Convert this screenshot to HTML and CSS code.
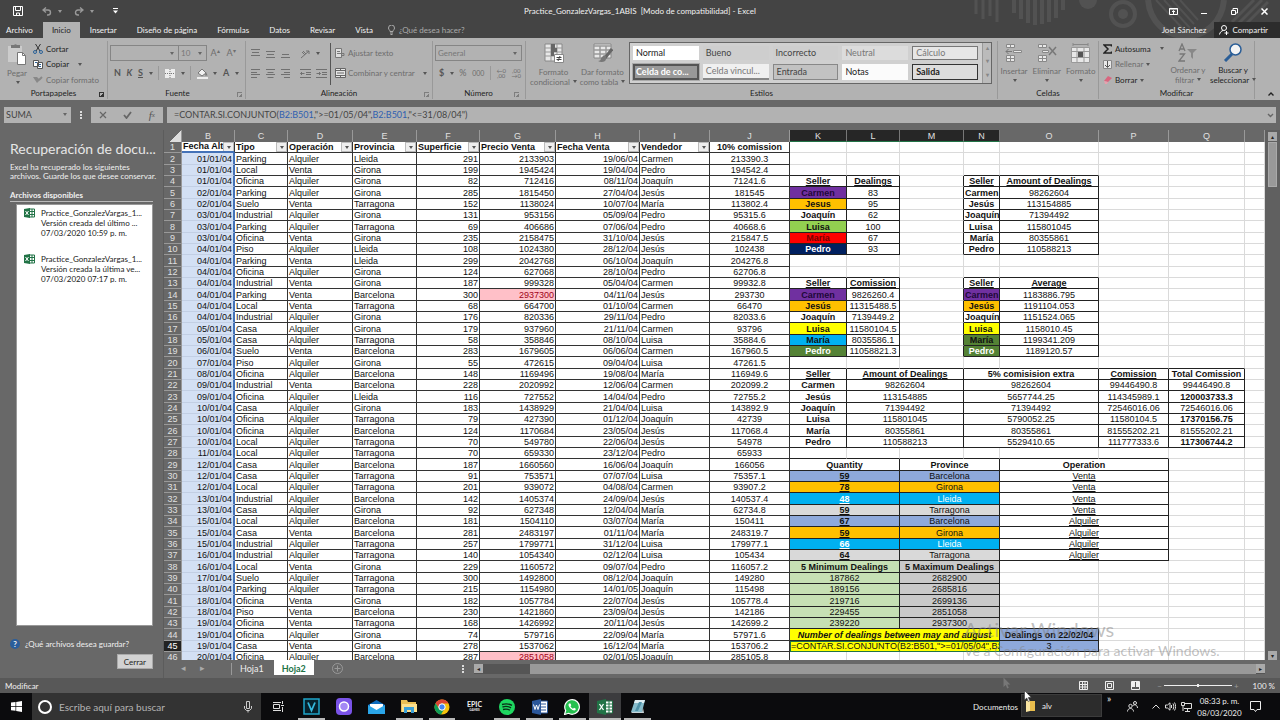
FILE: index.html
```html
<!DOCTYPE html>
<html lang="es">
<head>
<meta charset="utf-8">
<title>Practice_GonzalezVargas_1ABIS - Excel</title>
<link rel="stylesheet" href="styles.css">
</head>
<body>
<header class="top">
  <svg class="decor" width="300" height="38" viewBox="0 0 300 38" fill="none" stroke="#525252">
    <g stroke-width="3"><path d="M6 0v14M13 0v19M20 0v16M27 0v22"/></g>
    <g stroke-width="4"><path d="M44 0v13M51 0v19M58 0v23M65 0v25M72 0v24M79 0v22M86 0v18M93 0v10"/></g>
    <circle cx="118" cy="0" r="9" fill="#525252" stroke="none"/>
    <circle cx="153" cy="14" r="12" stroke-width="4"/><circle cx="153" cy="14" r="5" fill="#525252" stroke="none"/>
    <path d="M178 0c2 22 18 36 38 36s36-14 38-36" stroke-width="6"/>
    <path d="M186 0l28 30M194 0l26 28M202 0l22 24M210 0l18 20" stroke-width="2"/>
    <path d="M262 22L284 0M268 24l24-24M276 24l22-22" stroke-width="3"/>
  </svg>
  <div class="titlebar">
    <div class="quick">
      <button aria-label="Guardar"><svg width="10" height="10" viewBox="0 0 10 10" fill="none" stroke="#fff"><path d="M.5.5h9v9h-9zM2.500.5v4h5v-4M3.500 9.500v-2.500h3v2.500"/></svg></button>
      <button class="dim" aria-label="Deshacer"><svg width="10" height="9" viewBox="0 0 10 9" fill="none" stroke="#999" stroke-width="1.400"><path d="M4 .5L1 3l3 2.500M1 3h5a2.500 2.500 0 010 5H5"/></svg><i class="caret"></i></button>
      <button class="dim" aria-label="Rehacer"><svg width="10" height="9" viewBox="0 0 10 9" fill="none" stroke="#999" stroke-width="1.400"><path d="M6 .5L9 3 6 5.500M9 3H4a2.500 2.500 0 000 5h1"/></svg><i class="caret"></i></button>
      <button aria-label="Personalizar"><svg width="5" height="6" viewBox="0 0 5 6"><path d="M0 0h5v1H0zM0 2.500h5L2.500 5.500z" fill="#fff"/></svg></button>
    </div>
    <h1>Practice_GonzalezVargas_1ABIS &nbsp;[Modo de compatibilidad] - Excel</h1>
    <div class="win">
      <button aria-label="Opciones de cinta"><svg width="9" height="7" viewBox="0 0 9 7" fill="none" stroke="#fff"><path d="M.5.5h8v6h-8zM0 1h9M4.500 6V3M3 4l1.500-1.500L6 4"/></svg></button>
      <button aria-label="Minimizar"><svg width="7" height="7" viewBox="0 0 7 7" stroke="#fff"><path d="M0 5.500h6"/></svg></button>
      <button aria-label="Restaurar"><svg width="7" height="7" viewBox="0 0 7 7" fill="none" stroke="#fff"><path d="M.5 2.500h4v4h-4zM2 2V.5h4.500V5H5"/></svg></button>
      <button aria-label="Cerrar ventana"><svg width="7" height="7" viewBox="0 0 7 7" stroke="#fff" stroke-width="1.500"><path d="M.5.5l6 6M6.500.5l-6 6"/></svg></button>
    </div>
  </div>
  <nav class="tabs">
    <button>Archivo</button><button class="on">Inicio</button><button>Insertar</button><button>Diseño de página</button><button>Fórmulas</button><button>Datos</button><button>Revisar</button><button>Vista</button>
    <button class="tell"><svg width="7" height="10" viewBox="0 0 7 10" fill="none" stroke="#aaa"><path d="M2 6.500C2 5 .5 4.800.5 3a3 3 0 016 0C6.500 4.800 5 5 5 6.500zM2 8h3M2.500 9.500h2"/></svg>¿Qué desea hacer?</button>
    <span class="user">Joel Sánchez</span>
    <button class="share"><svg width="10" height="10" viewBox="0 0 10 10" fill="none" stroke="#fff"><circle cx="5" cy="3" r="2.500"/><path d="M.5 9.500C1 7 2.500 6 4 5.500M5.500 8h4M7.500 6v4"/></svg>Compartir</button>
  </nav>
</header>

<section class="ribbon">
  <div class="group clip">
    <div class="gbody row">
      <button class="big dis"><svg width="20" height="22" viewBox="0 0 20 22"><path d="M1 3h14v16H1z" fill="#ccc"/><path d="M4 2h3a2 1.500 0 013 0h3v3H4z" fill="#777"/><path d="M10.500 9.500h5l3 3v9h-8z" fill="#fff" stroke="#777"/><path d="M15.500 9.500v3h3" fill="none" stroke="#777"/></svg>Pegar<i class="caret"></i></button>
      <div class="list">
        <button><svg width="10" height="10" viewBox="0 0 10 10" fill="none" stroke="#333"><path d="M2.500 0L7 7M7.500 0L3 7"/><g stroke="#2b6299"><circle cx="2" cy="8" r="1.500"/><circle cx="8" cy="8" r="1.500"/></g></svg>Cortar</button>
        <button><svg width="10" height="9" viewBox="0 0 10 9" fill="#fff" stroke="#555"><path d="M.5.5h5v6h-5zM4.500 2.500h5v6h-5z"/><path d="M6 4.500h2M6 6.500h2M2 2.500h2" stroke="#2b6299"/></svg>Copiar<i class="caret wide"></i></button>
        <button class="dis"><svg width="10" height="9" viewBox="0 0 10 9"><path d="M0 1l4 6 3-3-3-3z" fill="#888"/><path d="M6 4l3-3" stroke="#888" stroke-width="2"/></svg>Copiar formato</button>
      </div>
    </div>
    <div class="glabel">Portapapeles<i class="corner"></i></div>
  </div>
  <div class="group font">
    <div class="gbody col">
      <div class="row first"><label class="drop grow"><select aria-label="Fuente"><option></option></select></label><label class="drop size"><select aria-label="Tamaño"><option>10</option></select></label><button class="dis let">A<sup>▴</sup></button><button class="dis let sm">A<sup>▾</sup></button></div>
      <div class="row second"><button class="let b">N</button><button class="let b it">K</button><button class="let b un">S</button><i class="caret"></i><i class="sep"></i>
        <button aria-label="Bordes"><svg width="10" height="9" viewBox="0 0 10 9"><path d="M0 0h10v9H0z" fill="#ececec"/><path d="M5 0v9M0 4.500h10" stroke="#777" stroke-dasharray="1 1"/></svg></button><i class="caret"></i><i class="sep"></i>
        <button aria-label="Relleno"><svg width="11" height="11" viewBox="0 0 11 11"><path d="M1 5l4-4 4 4-4 3z" fill="#f2f2f2" stroke="#777"/><path d="M9 4l1.500 3.500H8z" fill="#777"/><path d="M0 9h11v2H0z" fill="#eee"/></svg></button><i class="caret"></i><button class="dis let b">A</button><i class="caret"></i></div>
    </div>
    <div class="glabel">Fuente<i class="corner dim"></i></div>
  </div>
  <div class="group align">
    <div class="gbody row">
      <div class="aicons">
        <svg width="9" height="9"><path d="M0 .5h9M1 3.500h7M0 6.500h9"/></svg><svg width="9" height="9"><path d="M0 2.500h9M1 5.500h7M0 8.500h9"/></svg><svg width="9" height="9"><path d="M1 5.500h7M0 8.500h9"/></svg><svg width="12" height="10"><path d="M1 9L9 2M6 2h3v3M2 3l3 3M3 2l3 3"/></svg><i class="caret"></i>
        <svg width="9" height="9"><path d="M0 .5h9M0 3.500h6M0 5.500h9M0 8.500h6"/></svg><svg width="9" height="9"><path d="M0 .5h9M1.500 3.500h6M0 5.500h9M1.500 8.500h6"/></svg><svg width="9" height="9"><path d="M0 .5h9M3 3.500h6M0 5.500h9M3 8.500h6"/></svg><svg width="11" height="9"><path d="M0 .5h11M6 3.500h5M6 5.500h5M0 8.500h11M4.500 4.500h-4M2 3L.5 4.500 2 6"/></svg><svg width="11" height="9"><path d="M0 .5h11M6 3.500h5M6 5.500h5M0 8.500h11M.5 4.500h4M3 3l1.500 1.500L3 6"/></svg>
      </div>
      <div class="wrapcol dis">
        <button><svg width="11" height="10" viewBox="0 0 11 10" fill="none" stroke="#777"><path d="M.5.5h6v9h-6z" fill="#ddd"/><path d="M2 3.500h3M2 5.500h7v2H7"/></svg>Ajustar texto</button>
        <button><svg width="11" height="10" viewBox="0 0 11 10" fill="#e6e6e6" stroke="#666"><path d="M.5.5h10v9H.5zM0 2.500h11M0 7.500h11M2 5h7M5.500 0v2.500M5.500 7.500V10"/></svg>Combinar y centrar<i class="caret wide"></i></button>
      </div>
    </div>
    <div class="glabel">Alineación<i class="corner dim"></i></div>
  </div>
  <div class="group num">
    <div class="gbody col">
      <div class="row first"><label class="drop grow"><select aria-label="Formato de número"><option>General</option></select></label></div>
      <div class="row second dis"><button class="let b">$</button><i class="caret"></i><button class="let">%</button><button class="tiny">000</button><i class="sep"></i><button class="tiny two">←0<br>,00</button><button class="tiny two">,00<br>→0</button></div>
    </div>
    <div class="glabel">Número<i class="corner dim"></i></div>
  </div>
  <div class="group styles">
    <div class="gbody row">
      <button class="big dis"><svg width="20" height="21" viewBox="0 0 20 21"><path d="M1 1h17v17H1z" fill="#e8e8e8" stroke="#888"/><path d="M1 5h17M1 9h17M1 13h17M7 1v17M13 1v17" stroke="#999"/><path d="M7 1h4v4H7zM7 5h6v4H7zM7 9h3v4H7z" fill="#666"/><path d="M10.500 11.500h9v8h-9z" fill="#fff" stroke="#888"/><path d="M12.500 14.500h5M12.500 16.500h5M16 13l-2 5" stroke="#444"/></svg><span>Formato<br>condicional <i class="caret"></i></span></button>
      <button class="big dis"><svg width="20" height="21" viewBox="0 0 20 21"><path d="M1 1h17v14H1z" fill="#e8e8e8" stroke="#888"/><path d="M1 3h17M1 7h17M1 11h17M7 3v12M13 3v12" stroke="#999" stroke-width="1.500"/><path d="M19 6l-7 9" stroke="#666" stroke-width="3"/><path d="M13 13l-2-1-3 3c0 2-1 3-3 3 3 2 8 1 8-2z" fill="#777"/></svg><span>Dar formato<br>como tabla <i class="caret"></i></span></button>
      <div class="gallery">
        <button class="s1">Normal</button><button class="s2">Bueno</button><button class="s2">Incorrecto</button><button class="s3">Neutral</button><button class="s4">Cálculo</button>
        <button class="s5">Celda de co...</button><button class="s6">Celda vincul...</button><button class="s7">Entrada</button><button class="s8">Notas</button><button class="s9">Salida</button>
        <div class="spin"><b>▴</b><b>▾</b><b>▾</b></div>
      </div>
    </div>
    <div class="glabel">Estilos</div>
  </div>
  <div class="group cells">
    <div class="gbody row dis">
      <button class="big"><svg width="18" height="20" viewBox="0 0 18 20"><g fill="#e8e8e8" stroke="#888"><path d="M1.500 1.500h4v3h-4zM5.500 1.500h4v3h-4zM8.500 7.500h8v2h-8zM1.500 12.500h4v3h-4zM5.500 12.500h4v3h-4zM1.500 15.500h4v3h-4zM5.500 15.500h4v3h-4z"/></g><path d="M1 8.500h6M3.500 6L1 8.500 3.500 11" fill="none" stroke="#777"/></svg>Insertar<i class="caret"></i></button>
      <button class="big"><svg width="20" height="20" viewBox="0 0 20 20"><g fill="#e8e8e8" stroke="#888"><path d="M1.500 1.500h4v3h-4zM5.500 1.500h4v3h-4zM5.500 7.500h6v2h-6zM1.500 12.500h4v3h-4zM5.500 12.500h4v3h-4zM1.500 15.500h4v3h-4zM5.500 15.500h4v3h-4z"/></g><path d="M12 4l7 8M19 4l-7 8" stroke="#777" stroke-width="1.500"/></svg>Eliminar<i class="caret"></i></button>
      <button class="big"><svg width="20" height="20" viewBox="0 0 20 20"><path d="M2 1.500h15M2 0v3M17 0v3" stroke="#888"/><path d="M.5 4.500h18v15H.5z" fill="#e8e8e8" stroke="#999"/><path d="M0 8.500h19M0 14.500h19M6 4v16M13 4v16" stroke="#999"/><path d="M7 9h5v5H7z" fill="#555"/></svg>Formato<i class="caret"></i></button>
    </div>
    <div class="glabel">Celdas</div>
  </div>
  <div class="group edit">
    <div class="gbody row">
      <div class="list">
        <button><svg width="9" height="10" viewBox="0 0 9 10" fill="none" stroke="#222" stroke-width="1.500"><path d="M8.500 2.500V1H1l4 4-4 4h7.500V7.500"/></svg>Autosuma<i class="caret wide"></i></button>
        <button class="dis"><svg width="9" height="9" viewBox="0 0 9 9"><path d="M.5.5h8v8h-8z" fill="#e8e8e8" stroke="#888"/><path d="M4.500 1v6M2 5l2.500 2.500L7 5" fill="none" stroke="#555"/></svg>Rellenar<i class="caret"></i></button>
        <button><svg width="9" height="8" viewBox="0 0 9 8"><path d="M1 5l4-5 4 2-4 4z" fill="#d9667f"/><path d="M1 5l4 1-1 2H2z" fill="#e7a1ae"/></svg>Borrar<i class="caret"></i></button>
      </div>
      <button class="big dis"><svg width="20" height="19" viewBox="0 0 20 19" fill="none" stroke="#777" stroke-width="1.300"><path d="M1 8l3-7 3 7M2 6h4M1.500 11h5L1 18h6"/><path d="M9 6h10l-4 4v6l-2-2v-4z" fill="#888" stroke="none"/></svg><span>Ordenar y<br>filtrar <i class="caret"></i></span></button>
      <button class="big"><svg width="20" height="19" viewBox="0 0 20 19"><path d="M9 11l-7 7" stroke="#2b5e97" stroke-width="3"/><circle cx="12.500" cy="6.500" r="5.500" fill="#f4f4f4" stroke="#2b5e97" stroke-width="1.500"/></svg><span>Buscar y<br>seleccionar <i class="caret"></i></span></button>
    </div>
    <div class="glabel">Modificar</div>
  </div>
  <div class="collapse"><svg width="6" height="4" viewBox="0 0 6 4" fill="none" stroke="#222" stroke-width="1.400"><path d="M.5 3.500L3 1l2.500 2.500"/></svg></div>
</section>

<section class="fbar">
  <label class="drop name"><select aria-label="Cuadro de nombres"><option>SUMA</option></select></label>
  <span class="dots"></span>
  <div class="fbtns"><button aria-label="Cancelar"><svg width="8" height="8" viewBox="0 0 8 8" stroke="#666" stroke-width="1.200"><path d="M1 1l6 6M7 1L1 7"/></svg></button><button aria-label="Introducir"><svg width="9" height="8" viewBox="0 0 9 8" fill="none" stroke="#666" stroke-width="1.800"><path d="M1 4l2.500 3L8 1"/></svg></button><button class="fx">f<small>x</small></button></div>
  <div class="formula"><span>=CONTAR.SI.CONJUNTO(<em>B2:B501</em>,"&gt;=01/05/04",<em>B2:B501</em>,"&lt;=31/08/04")</span><svg width="7" height="5" viewBox="0 0 7 5" fill="none" stroke="#666" stroke-width="1.400"><path d="M1 1l2.500 2.500L6 1"/></svg></div>
</section>

<main>
  <aside>
    <h2>Recuperación de docu...</h2>
    <p>Excel ha recuperado los siguientes archivos. Guarde los que desee conservar.</p>
    <h3>Archivos disponibles</h3>
    <ul>
      <li><svg width="11" height="10" viewBox="0 0 11 10"><path d="M5 1h5.500v8H5z" fill="#fff" stroke="#217346"/><path d="M5 3.500h5M5 6.500h5M8 1v8" stroke="#217346"/><path d="M0 1l6-1v10L0 9z" fill="#217346"/><path d="M1.500 3l3 4M4.500 3l-3 4" stroke="#fff"/></svg><div>Practice_GonzalezVargas_1...<br>Versión creada del último ...<br>07/03/2020 10:59 p. m.</div></li>
      <li><svg width="11" height="10" viewBox="0 0 11 10"><path d="M5 1h5.500v8H5z" fill="#fff" stroke="#217346"/><path d="M5 3.500h5M5 6.500h5M8 1v8" stroke="#217346"/><path d="M0 1l6-1v10L0 9z" fill="#217346"/><path d="M1.500 3l3 4M4.500 3l-3 4" stroke="#fff"/></svg><div>Practice_GonzalezVargas_1...<br>Versión creada la última ve...<br>07/03/2020 07:17 p. m.</div></li>
    </ul>
    <a class="help" href="#"><b>?</b>¿Qué archivos desea guardar?</a>
    <button class="close">Cerrar</button>
  </aside>
  <section class="book">
    <div class="view">
      <div class="sheet">
        <table>
          <colgroup id="cols"></colgroup>
          <thead><tr id="letters"></tr></thead>
          <tbody id="cells"></tbody>
        </table>
        <div class="mark"><strong>Activar Windows</strong>Ve a Configuración para activar Windows.</div>
      </div>
      <div class="vscroll"><button>▴</button><i></i><span></span><button>▾</button></div>
    </div>
    <div class="sheets">
      <button class="arrow">◂</button><button class="arrow">▸</button><i class="line"></i><button>Hoja1</button><button class="on">Hoja2</button>
      <button class="add" aria-label="Hoja nueva"><svg width="11" height="11" viewBox="0 0 11 11" fill="none" stroke="#999"><circle cx="5.500" cy="5.500" r="5"/><path d="M2.500 5.500h6M5.500 2.500v6"/></svg></button>
      <span class="dots"></span>
      <div class="hscroll"><button>◂</button><span></span><i></i><button>▸</button></div>
    </div>
  </section>
</main>

<footer class="status">
  <span>Modificar</span>
  <div class="views">
    <svg width="9" height="9" viewBox="0 0 9 9" fill="none" stroke="#eee"><path d="M.5.5h8v8h-8zM3.500 0v9M6 0v9M0 3.500h9M0 6h9"/></svg>
    <svg width="9" height="9" viewBox="0 0 9 9" fill="none" stroke="#eee"><path d="M.5.5h8v8h-8zM2.500 2.500h4v4h-4z"/></svg>
    <svg width="9" height="9" viewBox="0 0 9 9" fill="none" stroke="#eee"><path d="M.5.5h8v8h-8z"/><path d="M1 1h3v5H1zM5 1h3v5H5z" fill="#eee" stroke="none"/></svg>
  </div>
  <div class="zoom"><span>−</span><i></i><span>+</span></div>
  <span>100 %</span>
</footer>

<footer class="task">
  <button class="start" aria-label="Inicio de Windows"><svg width="11" height="11" viewBox="0 0 11 11" fill="#fff"><path d="M0 1.500L4.500 1v4H0zM5.200.9L11 0v5H5.200zM0 5.700h4.500v4L0 9.300zM5.200 5.700H11V11l-5.800-.9z"/></svg></button>
  <label class="search"><svg width="14" height="14" viewBox="0 0 14 14" fill="none" stroke="#fff" stroke-width="2"><circle cx="7" cy="7" r="6"/></svg><input placeholder="Escribe aquí para buscar" aria-label="Buscar"><svg width="8" height="12" viewBox="0 0 8 12" fill="none" stroke="#ccc"><path d="M2.500.5h3v7h-3zM.5 5v2.500l2 2h3l2-2V5M4 9.500v2"/></svg></label>
  <button class="tv" aria-label="Vista de tareas"><svg width="11" height="11" viewBox="0 0 11 11" fill="none" stroke="#ddd"><path d="M0 1.500h8M.5 3.500h6v4h-6zM0 9.500h8M9.500 0v3M9.500 6v5M8 4.500h3"/></svg></button>
  <div class="apps">
    <button class="run"><svg width="17" height="17" viewBox="0 0 17 17"><path d="M1 1h15v15H1z" fill="#06222d" stroke="#1fa5c9" stroke-width="1.500"/><path d="M5 4.500l3.500 8 3.500-8" fill="none" stroke="#35b9dd" stroke-width="1.800"/></svg></button>
    <button><svg width="16" height="17" viewBox="0 0 16 17"><rect width="16" height="17" rx="4" fill="#7a53e8"/><circle cx="8" cy="8.500" r="4.500" fill="#a488f5" stroke="#fff" stroke-width="1.500"/></svg></button>
    <button><svg width="17" height="14" viewBox="0 0 17 14"><path d="M0 5l8.500-5L17 5v9H0z" fill="#0f6cbd"/><path d="M2 4h13v4l-6.500 4L2 8z" fill="#fff"/><path d="M0 5l8.500 5L17 5v9H0z" fill="#2aa5e8"/></svg></button>
    <button class="run"><svg width="16" height="13" viewBox="0 0 16 13"><path d="M0 0h6l1 2h8v10H0z" fill="#eabf55"/><path d="M1 4h15v8H1z" fill="#fbe08f"/><path d="M3 7h10v6h-3v-3H6v3H3z" fill="#3aa0d8"/></svg></button>
    <button class="run"><svg width="16" height="16" viewBox="0 0 16 16"><circle cx="8" cy="8" r="7.500" fill="#f4c20d"/><path d="M1.500 4.250A7.500 7.500 0 0114.500 4.500H8a3.500 3.500 0 00-3 5.300z" fill="#db4437"/><path d="M1.500 4.250A7.500 7.500 0 007 15.500l3-5a3.500 3.500 0 01-5-.7z" fill="#0f9d58"/><circle cx="8" cy="8" r="3.200" fill="#4285f4" stroke="#fff"/></svg></button>
    <button><span class="epic">EPIC<small>GAMES</small></span></button>
    <button class="run"><svg width="16" height="16" viewBox="0 0 16 16"><circle cx="8" cy="8" r="8" fill="#1ed760"/><path d="M3 5.500c4-1.200 7-.8 10 .8M3.500 8c3-1 6-.6 8.500.8M4 10.500c3-.7 5-.5 7 .7" fill="none" stroke="#0b2d17" stroke-width="1.400"/></svg></button>
    <button class="run"><svg width="16" height="16" viewBox="0 0 16 16"><path d="M8 2h7.500v12H8z" fill="#fff" stroke="#2b579a"/><path d="M9 5h5M9 8h5M9 11h5" stroke="#2b579a"/><path d="M0 2l9-2v16l-9-2z" fill="#2b579a"/><path d="M1.500 5.500l1.500 5 1.500-4.500L6 10.500l1.500-5" fill="none" stroke="#fff"/></svg></button>
    <button class="run"><svg width="16" height="16" viewBox="0 0 16 16"><path d="M.5 15.500l1.200-4A7.300 7.300 0 114.500 14.300z" fill="#25c04f" stroke="#fff" stroke-width="1.200"/><path d="M5 4.500c-1 1-.5 3 1.500 5s4 2.500 5 1.500l.3-1.300L10 8.800l-1 .9c-1-.4-2-1.400-2.500-2.500l.8-1-.8-1.700z" fill="#fff"/></svg></button>
    <button class="run active"><svg width="16" height="16" viewBox="0 0 16 16"><path d="M8 2h7.500v12H8z" fill="#fff" stroke="#217346"/><path d="M9 5h6M9 8h6M9 11h6M12 2v12" stroke="#217346"/><path d="M0 2l9-2v16l-9-2z" fill="#217346"/><path d="M2.500 5l4 6M6.500 5l-4 6" stroke="#fff" stroke-width="1.300"/></svg></button>
    <button class="run"><svg width="16" height="15" viewBox="0 0 16 15"><path d="M5 1h10l-3 12H1z" fill="#86bccb"/><path d="M5 1h10l-1 3H4z" fill="#e0eef2"/><path d="M1 13h11l1-4 1 5H2z" fill="#c8d4d8"/><path d="M9 3l3 0-4 9H5z" fill="#4f92a8"/></svg></button>
  </div>
  <span class="docs">Documentos</span>
  <button class="alv"><svg width="10" height="12" viewBox="0 0 10 12"><path d="M0 1l4-1v11l-4 1z" fill="#fbe6a2"/><path d="M4 1h5v10H4z" fill="#e9bd4d"/></svg>alv</button>
  <div class="tray">
    <span class="more">»</span>
    <svg width="11" height="11" viewBox="0 0 11 11" fill="none" stroke="#ddd"><circle cx="3.500" cy="5" r="1.700"/><path d="M.5 10.500c0-4 6-4 6 0"/><circle cx="8" cy="2" r="1.500"/><path d="M5.500 5c1-2 5-1.500 5 2"/></svg>
    <svg width="8" height="5" viewBox="0 0 8 5" fill="none" stroke="#ddd"><path d="M.5 4.500L4 1l3.500 3.500"/></svg>
    <svg width="11" height="9" viewBox="0 0 11 9" fill="none" stroke="#ddd"><path d="M.5 3h2L5 .8v7.400L2.500 6h-2zM6.500 3v3M8 1.500c1 2 1 4 0 6M9.500.5c1.500 2.500 1.500 5.500 0 8"/></svg>
    <svg width="11" height="10" viewBox="0 0 11 10" fill="none" stroke="#ddd"><path d="M4 1.500h6.500v5H3M6.500 7v2M4 9.500h5M.5.5h3v3h-3zM2 4v5"/></svg>
    <time>08:33 p. m.<br>08/03/2020</time>
    <svg width="11" height="11" viewBox="0 0 11 11" fill="none" stroke="#eee"><path d="M.5.5h10v8H7L5.500 10.500 4 8.500H.5z"/></svg>
  </div>
</footer>
<svg class="cursor" width="8" height="12" viewBox="0 0 8 12"><path d="M.5.5v9.500l2.300-2 1.400 3.500 1.600-.7L4.300 7.500h3z" fill="#fff" stroke="#333" stroke-width=".6"/></svg>
<svg class="cursor ghost" width="8" height="12" viewBox="0 0 8 12"><path d="M.5.5v9.500l2.300-2 1.400 3.500 1.600-.7L4.300 7.500h3z" fill="#777"/></svg>
<script src="sheet.js"></script>
</body>
</html>
```
FILE: styles.css
```css
* { box-sizing: border-box; }
body { margin: 0; height: 100vh; display: flex; flex-direction: column; overflow: hidden; background: #686868; color: #222; font: 8px/10px Lato, "Open Sans", sans-serif; }
button { display: flex; align-items: center; margin: 0; padding: 0; border: 0; background: none; color: inherit; font: inherit; white-space: nowrap; }
svg { flex: none; display: block; }
select, input { margin: 0; padding: 0; border: 0; background: none; color: inherit; font: inherit; appearance: none; outline: 0; min-width: 0; }
h1, h2, h3, p, ul { margin: 0; padding: 0; font: inherit; }
.row { display: flex; align-items: center; }
.dis { color: #6d6d6d; }
.caret { display: inline-block; flex: none; width: 0; height: 0; border: 2px solid transparent; border-top: 3px solid #555; border-bottom: 0; }
.caret.wide { margin-left: 6px; }

/* title and tabs */
.top { position: relative; background: #444; color: #f2f2f2; flex: none; }
.decor { position: absolute; right: 10px; top: 0; }
.titlebar { position: relative; display: grid; grid-template-columns: 1fr auto 1fr; align-items: center; height: 22px; }
.quick { display: flex; gap: 17px; padding-left: 13px; }
.quick button { gap: 6px; }
.quick .dim { margin-left: 2px; margin-right: -7px; }
.quick .caret { border-top-color: #999; }
.quick button:last-child { margin-left: 9px; }
.win { display: flex; justify-content: flex-end; gap: 23px; padding-right: 12px; }
.tabs { position: relative; display: flex; height: 16px; }
.tabs button { padding: 0 10px; }
.tabs button:first-child { padding-left: 6px; }
.tabs .on { background: #b2b2b2; color: #222; padding: 0 9px; }
.tabs .tell { color: #aaa; gap: 4px; padding-left: 5px; }
.user { margin-left: auto; padding: 3px 8px 0 0; }
.tabs .share { background: #2c2c2c; gap: 3px; padding: 0 12px 0 5px; }

/* ribbon */
.ribbon { display: flex; flex: none; height: 62px; background: #b2b2b2; }
.group { display: flex; flex-direction: column; border-right: 1px solid #999; margin: 3px 0 1px; flex: none; }
.gbody { flex: 1; min-height: 0; }
.gbody.row { align-items: stretch; }
.glabel { position: relative; text-align: center; height: 11px; }
.corner { position: absolute; right: 3px; top: 4px; width: 5px; height: 5px; border: solid #333; border-width: 1px 0 0 1px; background: linear-gradient(135deg, transparent 50%, #333 50%); }
.corner.dim { opacity: .4; }
.big { flex-direction: column; justify-content: flex-start; gap: 3px; text-align: center; padding-top: 2px; }
.big .caret { margin-left: 1px; vertical-align: 2px; }
.list { display: flex; flex-direction: column; justify-content: space-around; align-items: flex-start; }
.list button { gap: 3px; height: 14px; }
.clip { width: 108px; }
.clip .gbody { padding-left: 7px; gap: 6px; }
.col { display: flex; flex-direction: column; }
.first { height: 23px; }
.second { height: 18px; }
.drop { position: relative; display: flex; border: 1px solid #858585; height: 16px; color: #777; }
.drop select { width: 100%; padding-left: 2px; }
.drop::after { content: ""; position: absolute; right: 4px; top: 6px; border: 2px solid transparent; border-top: 3px solid #666; border-bottom: 0; }
.grow { flex: 1; }
.font { width: 138px; padding-left: 2px; }
.size { width: 29px; margin-left: -1px; }
.let { font-size: 9px; justify-content: center; }
.let sup { font-size: 6px; line-height: 6px; align-self: flex-start; }
.b { font-weight: bold; color: #555; }
.it { font-style: italic; }
.un { text-decoration: underline; }
.sep { width: 1px; height: 14px; background: #999; }
.font .first { padding-right: 6px; }
.font .first .let { width: 16px; }
.font .second { justify-content: space-between; padding: 0 6px 0 4px; }
.align { width: 187px; }
.align .gbody { gap: 4px; }
.aicons { width: 85px; padding-left: 5px; display: grid; grid-template-columns: 15px 15px 19px 16px 11px; grid-template-rows: 21px 18px; align-items: center; border-right: 1px solid #555; margin: 2px 0 3px; }
.aicons svg { fill: none; stroke: #707070; }
.wrapcol { display: flex; flex-direction: column; }
.wrapcol button { gap: 2px; height: 23px; }
.wrapcol button + button { height: 18px; }
.num { width: 93px; padding: 0 3px 0 2px; }
.num .second { justify-content: space-between; padding: 0 1px 0 4px; }
.tiny { font-size: 7px; }
.two { font-size: 6px; line-height: 5px; }
.styles { flex: 1; }
.styles .gbody { padding-left: 3px; }
.styles .gbody > .big { width: 49px; }
.gallery { flex: 1; position: relative; display: grid; grid-template-columns: repeat(5, 1fr); gap: 4px; margin: 1px 5px 4px 2px; padding: 3px 13px 3px 3px; border: 1px solid #666; background: #d0d0d0; font-size: 9px; }
.gallery button { padding-left: 3px; }
.s1 { background: #fff; }
.gallery .s2 { background: #cecece; color: #444; }
.gallery .s3 { background: #dcdcdc; color: #777; }
.gallery .s4 { border: 1px solid #777; background: #e6e6e6; color: #777; }
.gallery .s5 { border: 2px solid #555; outline: 1px solid #aaa; background: #999; color: #fff; font-weight: bold; padding-left: 1px; }
.gallery .s6 { background: #f0f0f0; border-bottom: 2px double #888; color: #777; }
.gallery .s7 { background: #c2c2c2; border: 1px solid #888; color: #444; }
.s8 { background: #fbfbfb; }
.gallery .s9 { border: 1px solid #333; background: #ddd; font-weight: bold; }
.spin { position: absolute; right: 0; top: 0; bottom: 0; width: 9px; background: #bbb; border-left: 1px solid #999; display: grid; font-size: 6px; color: #888; text-align: center; }
.cells { width: 101px; }
.cells .gbody { justify-content: space-around; }
.edit { width: 156px; }
.edit .gbody { padding-left: 4px; gap: 8px; }
.edit .list { width: 60px; }
.edit .big { width: 34px; }
.edit .big + .big { width: 48px; margin-left: -3px; }
.collapse { width: 25px; display: flex; align-items: flex-end; justify-content: center; padding: 0 0 4px 6px; }

/* formula bar */
.fbar { display: flex; flex: none; align-items: center; height: 30px; padding: 0 4px; color: #444; font-size: 9px; }
.fbar .drop, .fbtns, .formula { height: 16px; background: #b2b2b2; border: 0; }
.name { width: 67px; }
.fbar .name { color: #444; }
.dots { width: 2px; height: 8px; background: repeating-linear-gradient(#ddd 0 2px, transparent 2px 3px); margin: 0 9px; }
.fbtns { display: flex; width: 72px; justify-content: space-around; }
.fx { font-style: italic; font-family: "Liberation Serif", serif; font-size: 11px; color: #555; }
.fx small { font-size: 7px; }
.formula { flex: 1; margin-left: 4px; padding: 0 2px 0 7px; display: flex; align-items: center; justify-content: space-between; }
.formula em { font-style: normal; color: #2f5fb0; }

/* recovery pane */
main { flex: 1; min-height: 0; display: flex; }
aside { width: 164px; flex: none; display: flex; flex-direction: column; padding: 9px 10px; color: #f0f0f0; border-right: 1px solid #5c5c5c; }
aside h2 { font-size: 14px; line-height: 20px; color: #e6e6e6; white-space: nowrap; }
aside p { margin: 4px -8px 0 0; line-height: 9px; }
aside h3 { margin-top: 9px; font-weight: bold; line-height: 11px; border-bottom: 1px solid #bbb; }
aside ul { flex: 1; margin: 2px 0 0 6px; padding: 3px 7px; list-style: none; background: #fff; border: 1px solid #999; color: #222; }
aside li { display: flex; gap: 6px; margin-bottom: 16px; white-space: nowrap; }
.help { display: flex; align-items: center; gap: 5px; margin: 13px 0 5px; color: inherit; text-decoration: none; }
.help b { width: 10px; height: 10px; border-radius: 5px; background: #2b5e9b; text-align: center; }
.close { align-self: flex-end; height: 15px; padding: 0 6px; background: #d2d2d2; border: 1px solid #aaa; color: #222; }

/* worksheet */
.book { flex: 1; min-width: 0; display: flex; flex-direction: column; }
.view { flex: 1; min-height: 0; display: flex; }
.sheet { flex: 1; min-width: 0; overflow: hidden; position: relative; background: #fff; }
table { width: 100%; table-layout: fixed; border-collapse: separate; border-spacing: 0; font: 9px/10px "Liberation Sans", Arial, sans-serif; color: #111; }
thead th { height: 12px; padding: 0; background: #686868; color: #e0e0e0; font-weight: normal; border-right: 1px solid #999; }
thead th.sel { background: #262626; border-bottom: 1px solid #217346; border-right-color: #777; }
thead th:first-child { background: linear-gradient(135deg, #686868 60%, #ddd 60%); }
tbody tr { height: 11px; }
tbody tr:nth-child(3n+2) { height: 12px; }
tbody th { padding: 0; background: #686868; color: #e0e0e0; font-weight: normal; border-bottom: 1px solid #999; border-right: 1px solid #999; }
tbody th.sel { background: #222; color: #fff; }
td { padding: 0 1px; text-align: center; white-space: nowrap; overflow: hidden; border-right: 1px solid #dadada; border-bottom: 1px solid #dadada; }
td:nth-child(-n+10) { border-color: #333; text-align: left; }
td:nth-child(2), td:nth-child(6), td:nth-child(7), td:nth-child(8) { text-align: right; }
td:nth-child(10) { text-align: center; }
td:nth-child(2) { background: #d3e0f4; border-right: 2px solid #4472b8; border-bottom-color: #c2cfe4; }
tr:first-child td:nth-child(-n+10) { font-weight: bold; text-align: left; position: relative; }
tr:first-child td:nth-child(2) { background: #fff; border-right: 1px solid #333; border-bottom: 2px solid #4472b8; line-height: 9px; }
tr:first-child td:nth-child(10) { text-align: center; }
td button { position: absolute; right: 0; top: 0; width: 11px; height: 10px; justify-content: center; background: #eee; border: 1px solid #bbb; }
td.hot { background: #ffc0c8; color: #a00018; }
td.bx { border-color: #222; }
td.bb { border-bottom-color: #222; }
td.br { border-right-color: #222; }
td.h { font-weight: bold; text-decoration: underline; }
td.s { font-weight: bold; }
td.u { text-decoration: underline; }
td.lt { text-align: left; padding-left: 5px; }
td.purple { background: #7030a0; color: #200838; }
td.orange { background: #ffc000; }
td.lime { background: #92d050; }
td.red { background: #f00; color: #700; }
td.navy { background: #002060; color: #fff; }
td.yellow { background: #ff0; }
td.cyan { background: #00b0f0; }
td.green { background: #548235; color: #fff; }
td.k { color: #111; }
td.w { color: #fff; }
td.blue { background: #8ea9db; }
td.gray { background: #d9d9d9; }
td.mid { background: #c9c9c9; }
td.sage { background: #c6e0b4; }
td.i { font-style: italic; }
td.edit-cell { text-align: left; outline: 1px solid #217346; outline-offset: -1px; }
.mark { position: absolute; right: 36px; bottom: 0; width: 265px; font: 14px/18px Lato, sans-serif; color: rgba(130, 130, 130, .5); white-space: nowrap; }
.mark strong { display: block; font-weight: normal; font-size: 20px; line-height: 26px; }
.vscroll, .hscroll { display: flex; background: #555; }
.vscroll { width: 15px; flex-direction: column; padding: 2px 3px 0 3px; background: #606060; }
.vscroll button, .hscroll button { width: 9px; height: 9px; justify-content: center; background: #aaa; font-size: 6px; color: #222; }
.vscroll i { height: 45px; margin-top: 1px; background: #999; border: 1px solid #aaa; }
.vscroll span { flex: 1; }
.sheets { display: flex; flex: none; align-items: center; height: 18px; color: #eee; font-size: 9px; }
.sheets > button { height: 15px; align-self: flex-start; padding: 2px 8px 0; }
.sheets .arrow { color: #aaa; padding: 2px 6px; font-size: 9px; width: 19px; }
.sheets .arrow:first-child { margin-left: 11px; }
.line { width: 1px; height: 12px; background: #999; margin-left: 18px; }
.sheets .on { background: #fff; color: #217346; font-weight: bold; margin-left: 2px; }
.sheets .add { padding-left: 18px; }
.sheets .dots { margin: 0 10px 0 auto; }
.hscroll { width: 791px; height: 10px; margin-right: 15px; }
.hscroll span { width: 47px; }
.hscroll i { flex: 1; background: #999; }

/* status and task bars */
.status { display: flex; flex: none; align-items: center; height: 15px; padding: 0 5px; background: #585858; color: #f0f0f0; }
.views { display: flex; gap: 17px; margin-left: auto; }
.zoom { display: flex; align-items: center; gap: 2px; margin: 0 14px 0 17px; color: #999; }
.zoom i { width: 68px; height: 3px; background: linear-gradient(#eee, #eee) 50% 0 / 2px 3px no-repeat, linear-gradient(#eee, #eee) 0 1px / 100% 1px no-repeat; }
.task { display: flex; flex: none; height: 27px; background: #0b0b0d; color: #eee; align-items: stretch; }
.start { width: 32px; justify-content: center; }
.search { display: flex; align-items: center; gap: 7px; width: 229px; padding: 0 9px 0 6px; background: #333; }
.search input { flex: 1; font-size: 10px; line-height: 14px; color: #ccc; }
.search input::placeholder { color: #b4b4b4; opacity: 1; }
.tv { width: 34px; justify-content: center; }
.apps { display: flex; width: 359px; }
.apps button { flex: 1; position: relative; justify-content: center; }
.apps .run::after { content: ""; position: absolute; left: 3px; right: 3px; bottom: 0; height: 2px; background: #b9b9b9; }
.apps .active { background: #3c3c3e; }
.apps .active::after { left: 0; right: 0; }
.epic { font-weight: bold; font-size: 7px; line-height: 7px; text-align: center; }
.epic small { display: block; font-size: 3px; line-height: 4px; }
.docs { align-self: center; margin-left: auto; }
.alv { width: 81px; margin: 1px 5px 3px 3px; padding-left: 4px; gap: 6px; background: #2c2c2c; border: 1px solid #3c3c3c; }
.tray { display: flex; align-items: center; width: 173px; gap: 8px; }
.tray svg:nth-of-type(1) { margin: 0 6px 0 8px; }
.more { align-self: flex-start; font-size: 10px; }
.tray svg:nth-of-type(3) { margin: 0 -3px; }
.tray time { line-height: 12px; text-align: center; margin-left: -3px; }
.cursor { position: absolute; left: 1024px; top: 690px; }
.ghost { left: 1003px; top: 677px; }
```
FILE: sheet.js
```js
// Column letters with their widths; the last column takes what is left.
const columns = [['', 18], ['B', 53], ['C', 53], ['D', 65], ['E', 64], ['F', 63], ['G', 76], ['H', 84], ['I', 70], ['J', 80],
  ['K', 57], ['L', 53], ['M', 64], ['N', 36], ['O', 99], ['P', 70], ['Q', 76], ['', 0]];

const headings = ['Fecha Alt', 'Tipo', 'Operación', 'Provincia', 'Superficie', 'Precio Venta', 'Fecha Venta', 'Vendedor'];

const sales = `01/01/04|Parking|Alquiler|Lleida|291|2133903|19/06/04|Carmen
01/01/04|Local|Venta|Girona|199|1945424|19/04/04|Pedro
01/01/04|Oficina|Alquiler|Girona|82|712416|08/11/04|Joaquín
02/01/04|Parking|Alquiler|Girona|285|1815450|27/04/04|Jesús
02/01/04|Suelo|Venta|Tarragona|152|1138024|10/07/04|María
03/01/04|Industrial|Alquiler|Girona|131|953156|05/09/04|Pedro
03/01/04|Parking|Alquiler|Tarragona|69|406686|07/06/04|Pedro
03/01/04|Oficina|Venta|Girona|235|2158475|31/10/04|Jesús
04/01/04|Piso|Alquiler|Lleida|108|1024380|28/12/04|Jesús
04/01/04|Parking|Venta|Lleida|299|2042768|06/10/04|Joaquín
04/01/04|Oficina|Alquiler|Girona|124|627068|28/10/04|Pedro
04/01/04|Industrial|Venta|Girona|187|999328|05/04/04|Carmen
04/01/04|Parking|Venta|Barcelona|300|2937300|04/11/04|Jesús
04/01/04|Local|Venta|Tarragona|68|664700|01/10/04|Carmen
04/01/04|Industrial|Alquiler|Girona|176|820336|29/11/04|Pedro
05/01/04|Casa|Alquiler|Girona|179|937960|21/11/04|Carmen
05/01/04|Casa|Alquiler|Tarragona|58|358846|08/10/04|Luisa
06/01/04|Suelo|Venta|Barcelona|283|1679605|06/06/04|Carmen
07/01/04|Piso|Alquiler|Girona|55|472615|09/04/04|Luisa
08/01/04|Oficina|Alquiler|Barcelona|148|1169496|19/08/04|María
09/01/04|Industrial|Venta|Barcelona|228|2020992|12/06/04|Carmen
09/01/04|Oficina|Alquiler|Lleida|116|727552|14/04/04|Pedro
10/01/04|Casa|Alquiler|Girona|183|1438929|21/04/04|Luisa
10/01/04|Oficina|Alquiler|Tarragona|79|427390|01/12/04|Joaquín
10/01/04|Oficina|Alquiler|Barcelona|124|1170684|23/05/04|Jesús
10/01/04|Local|Alquiler|Tarragona|70|549780|22/06/04|Jesús
11/01/04|Local|Alquiler|Tarragona|70|659330|23/12/04|Pedro
12/01/04|Casa|Alquiler|Barcelona|187|1660560|16/06/04|Joaquín
12/01/04|Casa|Alquiler|Tarragona|91|753571|07/07/04|Luisa
12/01/04|Local|Alquiler|Tarragona|201|939072|04/08/04|Carmen
13/01/04|Industrial|Alquiler|Barcelona|142|1405374|24/09/04|Jesús
13/01/04|Casa|Alquiler|Girona|92|627348|12/04/04|María
15/01/04|Local|Alquiler|Barcelona|181|1504110|03/07/04|María
15/01/04|Casa|Venta|Barcelona|281|2483197|01/11/04|María
15/01/04|Industrial|Alquiler|Tarragona|257|1799771|31/12/04|Luisa
16/01/04|Industrial|Alquiler|Tarragona|140|1054340|02/12/04|Luisa
16/01/04|Local|Venta|Girona|229|1160572|09/07/04|Pedro
17/01/04|Suelo|Alquiler|Tarragona|300|1492800|08/12/04|Joaquín
18/01/04|Parking|Alquiler|Tarragona|215|1154980|14/01/05|Joaquín
18/01/04|Oficina|Venta|Girona|182|1057784|22/07/04|Jesús
18/01/04|Piso|Venta|Barcelona|230|1421860|23/09/04|Jesús
19/01/04|Oficina|Venta|Tarragona|168|1426992|20/11/04|Jesús
19/01/04|Oficina|Alquiler|Girona|74|579716|22/09/04|María
19/01/04|Casa|Venta|Girona|278|1537062|16/12/04|María
20/01/04|Oficina|Alquiler|Barcelona|287|2851058|02/01/05|Joaquín`.split('\n').map(r => r.split('|'));

// Cells from column K on, by row number: text~classes~colspan.
const summary = {
  3: '~bb|~bb||~bb|~bb',
  4: 'Seller~bx h|Dealings~bx h|~br|Seller~bx h|Amount of Dealings~bx h',
  5: 'Carmen~bx s purple|83~bx|~br|Carmen~bx s|98262604~bx',
  6: 'Jesus~bx s orange|95~bx|~br|Jesús~bx s|113154885~bx',
  7: 'Joaquín~bx s|62~bx|~br|Joaquín~bx s|71394492~bx',
  8: 'Luisa~bx s lime|100~bx|~br|Luisa~bx s lt|115801045~bx',
  9: 'María~bx s red|67~bx|~br|María~bx s|80355861~bx',
  10: 'Pedro~bx s navy|93~bx|~br|Pedro~bx s|110588213~bx',
  12: '~bb|~bb||~bb|~bb',
  13: 'Seller~bx h|Comission~bx h|~br|Seller~bx h|Average~bx h',
  14: 'Carmen~bx s purple|9826260.4~bx|~br|Carmen~bx s purple|1183886.795~bx',
  15: 'Jesús~bx s orange|11315488.5~bx|~br|Jesús~bx s orange|1191104.053~bx',
  16: 'Joaquín~bx s|7139449.2~bx|~br|Joaquín~bx s|1151524.065~bx',
  17: 'Luisa~bx s yellow|11580104.5~bx|~br|Luisa~bx s yellow lt|1158010.45~bx',
  18: 'María~bx s cyan|8035586.1~bx|~br|María~bx s green k|1199341.209~bx',
  19: 'Pedro~bx s green|11058821.3~bx|~br|Pedro~bx s green|1189120.57~bx',
  20: '~bb|~bb|~bb|~bb|~bb|~bb|~bb',
  21: 'Seller~bx h|Amount of Dealings~bx h~2|5% comisision extra~bx s~2|Comission~bx h|Total Comission~bx s',
  22: 'Carmen~bx s|98262604~bx~2|98262604~bx~2|99446490.8~bx|99446490.8~bx',
  23: 'Jesús~bx s|113154885~bx~2|5657744.25~bx~2|114345989.1~bx|120003733.3~bx s',
  24: 'Joaquín~bx s|71394492~bx~2|71394492~bx~2|72546016.06~bx|72546016.06~bx',
  25: 'Luisa~bx s|115801045~bx~2|5790052.25~bx~2|11580104.5~bx|17370156.75~bx s',
  26: 'María~bx s|80355861~bx~2|80355861~bx~2|81555202.21~bx|81555202.21~bx',
  27: 'Pedro~bx s|110588213~bx~2|5529410.65~bx~2|111777333.6~bx|117306744.2~bx s',
  28: '~bb|~bb|~bb|~bb|~bb|~bb',
  29: 'Quantity~bx s~2|Province~bx s~2|Operation~bx s~2',
  30: '59~bx h blue~2|Barcelona~bx blue~2|Venta~bx u~2',
  31: '78~bx h orange~2|Girona~bx orange~2|Venta~bx u~2',
  32: '48~bx h cyan w~2|Lleida~bx cyan w~2|Venta~bx u~2',
  33: '59~bx h gray~2|Tarragona~bx gray~2|Venta~bx u~2',
  34: '67~bx h blue~2|Barcelona~bx blue~2|Alquiler~bx u~2',
  35: '59~bx h orange~2|Girona~bx orange~2|Alquiler~bx u~2',
  36: '66~bx h cyan w~2|Lleida~bx cyan w~2|Alquiler~bx u~2',
  37: '64~bx h gray~2|Tarragona~bx gray~2|Alquiler~bx u~2',
  38: '5 Minimum Dealings~bx s sage~2|5 Maximum Dealings~bx s mid~2',
  39: '187862~bx sage~2|2682900~bx mid~2',
  40: '189156~bx sage~2|2685816~bx mid~2',
  41: '219716~bx sage~2|2699136~bx mid~2',
  42: '229455~bx sage~2|2851058~bx mid~2',
  43: '239220~bx sage~2|2937300~bx mid~2|~bb',
  44: 'Number of dealings between may and august~bx s i yellow~4|Dealings on 22/02/04~bx s blue',
  45: '=CONTAR.SI.CONJUNTO(B2:B501,"&gt;=01/05/04",B2:B501,"&lt;=31/08/04")~bx yellow edit-cell~4|3~bx blue'
};

const filter = '<button aria-label="Filtrar"><i class="caret"></i></button>';

function summaryCells(n) {
  let used = 0;
  let html = '';
  for (const spec of (summary[n] || '').split('|')) {
    const [text, cls = '', span = 1] = spec.split('~');
    used += Number(span);
    html += `<td class="${cls}" colspan="${span}">${text}</td>`;
  }
  return html + '<td></td>'.repeat(8 - used);
}

function salesCells(n) {
  if (n === 1) return headings.map(h => `<td>${h}${filter}</td>`).join('') + '<td>10% comission</td>';
  const row = sales[n - 2];
  const price = Number(row[5]);
  return row.map((v, i) => `<td${i === 5 && price > 2800000 ? ' class="hot"' : ''}>${v}</td>`).join('') + `<td>${price / 10}</td>`;
}

document.getElementById('cols').innerHTML = columns.map(c => c[1] ? `<col style="width:${c[1]}px">` : '<col>').join('');
document.getElementById('letters').innerHTML = columns.map(c => `<th${c[0] && 'KLMN'.includes(c[0]) ? ' class="sel"' : ''}>${c[0]}</th>`).join('');
document.getElementById('cells').innerHTML = Array.from({ length: 46 }, (_, i) => i + 1)
  .map(n => `<tr><th${n === 45 ? ' class="sel"' : ''}>${n}</th>${salesCells(n)}${summaryCells(n)}</tr>`).join('');
```
